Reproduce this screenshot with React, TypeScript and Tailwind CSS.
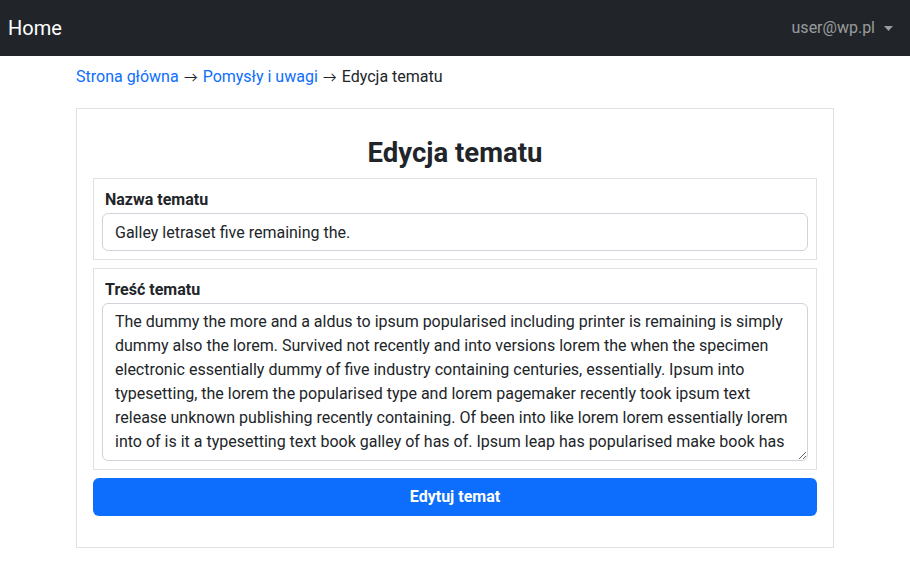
const body =
  "The dummy the more and a aldus to ipsum popularised including printer is remaining is simply dummy also the lorem. Survived not recently and into versions lorem the when the specimen electronic essentially dummy of five industry containing centuries, essentially. Ipsum into typesetting, the lorem the popularised type and lorem pagemaker recently took ipsum text release unknown publishing recently containing. Of been into like lorem lorem essentially lorem into of is it a typesetting text book galley of has of. Ipsum leap has popularised make book has";

function Arrow() {
  return <span className="mx-[5px] text-[14px]" style={{ fontFamily: "Lato, sans-serif" }}>→</span>;
}

export default function App() {
  return (
    <div className="min-h-[587px] bg-white text-[#212529] text-[16px]" style={{ fontFamily: "Roboto, 'Liberation Sans', sans-serif" }}>
      <nav className="h-[56px] bg-[#212529] flex items-center justify-between pl-[8px] pr-[17px]">
        <span className="text-white text-[20px] leading-[30px]">Home</span>
        <span className="flex items-center text-[rgba(255,255,255,0.55)] leading-6">
          user@wp.pl
          <svg className="ml-[9px]" width="9" height="5" viewBox="0 0 9 5">
            <path d="M0 0 L9 0 L4.5 5 Z" fill="rgba(255,255,255,0.55)" />
          </svg>
        </span>
      </nav>
      <div className="mx-[76px]">
        <div className="mt-[9px] leading-6 flex items-center">
          <a className="text-[#0d6efd]" href="#">Strona główna</a>
          <Arrow />
          <a className="text-[#0d6efd]" href="#">Pomysły i uwagi</a>
          <Arrow />
          <span>Edycja tematu</span>
        </div>
        <div className="mt-[19px] border border-[#dee2e6] px-4 pt-[26px] pb-[31px]">
          <h2 className="text-center font-bold text-[27.5px] leading-[35px] mb-2">Edycja tematu</h2>
          <div className="border border-[#dee2e6] p-2">
            <label className="block font-bold leading-6 pl-[3px] mt-[1px] mb-[1px]">Nazwa tematu</label>
            <input
              readOnly
              value="Galley letraset five remaining the."
              className="block w-full h-[38px] border border-[#ced4da] rounded-md px-3 text-[#212529] outline-none"
            />
          </div>
          <div className="border border-[#dee2e6] p-2 mt-2">
            <label className="block font-bold leading-6 pl-[3px] mt-[1px] mb-[1px]">Treść tematu</label>
            <textarea
              readOnly
              value={body}
              className="block w-full h-[158px] border border-[#ced4da] rounded-md px-3 py-[6px] leading-6 text-[#212529] outline-none resize-y [scrollbar-width:none]"
            />
          </div>
          <button className="mt-2 w-full h-[38px] rounded-md bg-[#0d6efd] text-white font-bold">Edytuj temat</button>
        </div>
      </div>
    </div>
  );
}
